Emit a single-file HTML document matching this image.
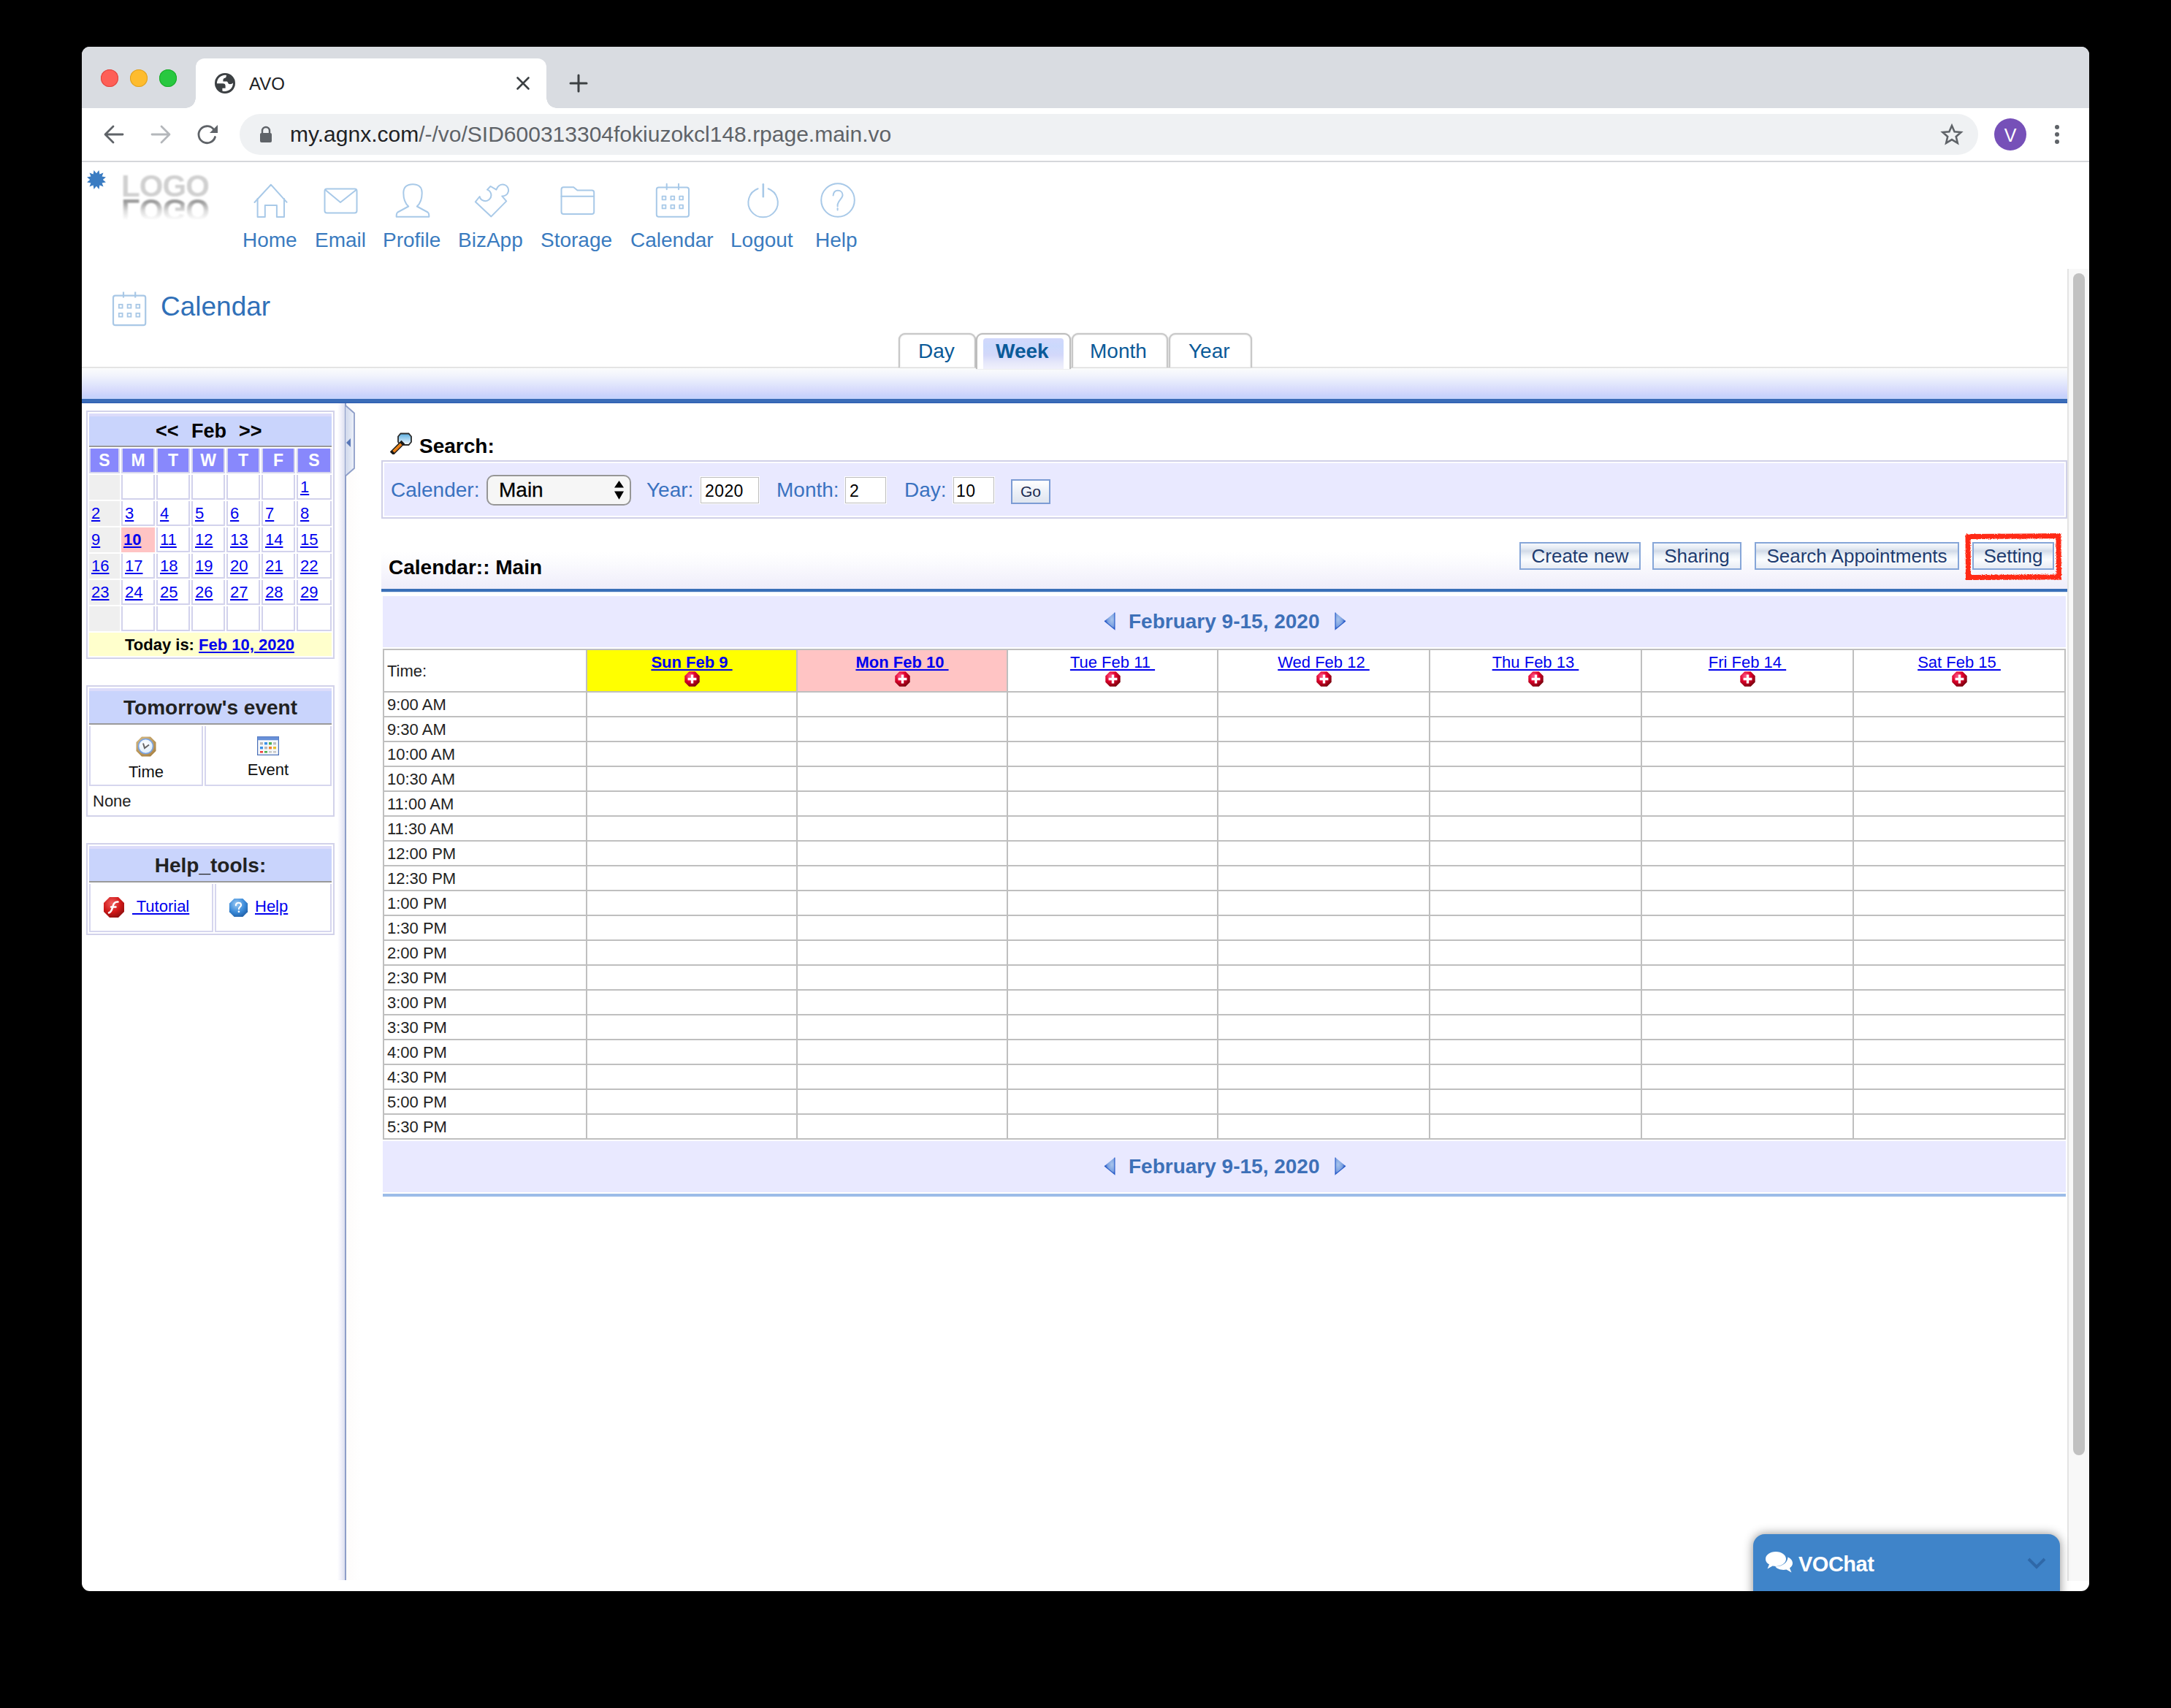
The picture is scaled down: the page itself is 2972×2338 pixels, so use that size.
<!DOCTYPE html>
<html><head><meta charset="utf-8">
<style>
html,body{margin:0;padding:0;}
body{width:2972px;height:2338px;background:#000;overflow:hidden;position:relative;font-family:"Liberation Sans",sans-serif;}
.a{position:absolute;}
.win{position:absolute;left:112px;top:64px;width:2748px;height:2114px;border-radius:11px;overflow:hidden;background:#fff;}
.pg{position:absolute;left:-112px;top:-64px;width:2972px;height:2338px;}
.t{position:absolute;white-space:pre;line-height:1;}
.nav{color:#3a7bbf;font-size:28px;}
.lnk{color:#0000ee;text-decoration:underline;}
.tab{border:2px solid #c8c8c8;border-bottom:none;border-radius:9px 9px 0 0;background:#fff;box-shadow:inset 0 0 1.5px 1px rgba(0,0,0,0.06), 0 0 1.5px rgba(0,0,0,0.25);box-sizing:border-box;}
.tab.act{border-color:#bdbdbd;background:#fff;box-shadow:0 0 1.5px rgba(0,0,0,0.25);}
.tabt{font-size:28px;color:#0a5a98;}
.btn{border:2px solid #86a6d8;box-sizing:border-box;background:linear-gradient(#f6f8fc 0%,#e6ecf4 18%,#d2dbe8 30%,#eef3f8 50%,#fafcfe 65%,#f0f3f8 85%,#e8ecf4 100%);}
</style></head><body>
<div class="win"><div class="pg">

<!-- ===== Chrome tab strip ===== -->
<div class="a" style="left:112px;top:64px;width:2748px;height:84px;background:#d9dce1;"></div>
<div class="a" style="left:138px;top:95px;width:24px;height:24px;border-radius:50%;background:#fe5f57;box-shadow:inset 0 0 0 1px #e0443e;"></div>
<div class="a" style="left:178px;top:95px;width:24px;height:24px;border-radius:50%;background:#febc2e;box-shadow:inset 0 0 0 1px #dea123;"></div>
<div class="a" style="left:218px;top:95px;width:24px;height:24px;border-radius:50%;background:#28c840;box-shadow:inset 0 0 0 1px #1aab29;"></div>
<!-- active tab -->
<div class="a" style="left:268px;top:80px;width:480px;height:68px;background:#fff;border-radius:12px 12px 0 0;"></div>
<div class="a" style="left:254px;top:134px;width:14px;height:14px;background:radial-gradient(circle at 0 0,#d9dce1 13.5px,#fff 14px);"></div>
<div class="a" style="left:748px;top:134px;width:14px;height:14px;background:radial-gradient(circle at 100% 0,#d9dce1 13.5px,#fff 14px);"></div>
<svg class="a" style="left:288px;top:94px" width="40" height="40" viewBox="0 0 40 40">
 <circle cx="20" cy="20" r="14" fill="#3c4043"/>
 <path d="M8.9 20.2 A11.2 11.2 0 0 1 22 8.9 L21.5 11.5 Q21 12.6 19 13 Q17.4 13.5 17.4 15.5 L17.4 17.4 L22.5 17.4 Q23.6 17.6 23.9 19 Q24.5 21.2 27 21.2 Q29.6 21.2 31 19.5 A11.2 11.2 0 0 1 16.4 30.5 L16.4 26.7 L20.6 26.7 L20.6 23.5 Q20.5 20.4 17 20.3 Z" fill="#fff"/>
</svg>
<div class="t" style="left:341px;top:103px;font-size:24px;color:#202124;">AVO</div>
<svg class="a" style="left:704px;top:102px" width="24" height="24" viewBox="0 0 24 24"><path d="M4.5 4.5L19.5 19.5M19.5 4.5L4.5 19.5" stroke="#3c4043" stroke-width="2.6" stroke-linecap="round"/></svg>
<svg class="a" style="left:778px;top:100px" width="28" height="28" viewBox="0 0 28 28"><path d="M14 3V25M3 14H25" stroke="#3c4043" stroke-width="3" stroke-linecap="round"/></svg>

<!-- ===== Toolbar ===== -->
<div class="a" style="left:112px;top:220px;width:2748px;height:2px;background:#d5d7db;"></div>
<svg class="a" style="left:140px;top:168px" width="32" height="32" viewBox="0 0 32 32"><path d="M28 16H5M15 5L4 16L15 27" stroke="#5f6368" stroke-width="2.8" fill="none" stroke-linecap="round" stroke-linejoin="round"/></svg>
<svg class="a" style="left:204px;top:168px" width="32" height="32" viewBox="0 0 32 32"><path d="M4 16H27M17 5L28 16L17 27" stroke="#b4b7bb" stroke-width="2.8" fill="none" stroke-linecap="round" stroke-linejoin="round"/></svg>
<svg class="a" style="left:268px;top:168px" width="32" height="32" viewBox="0 0 32 32"><path d="M26.5 19.5 A11.5 11.5 0 1 1 24 8.5" stroke="#5f6368" stroke-width="2.8" fill="none" stroke-linecap="round"/><path d="M30 3V14H19Z" fill="#5f6368"/></svg>
<div class="a" style="left:328px;top:156px;width:2380px;height:56px;border-radius:28px;background:#eff1f3;"></div>
<svg class="a" style="left:354px;top:172px" width="20" height="24" viewBox="0 0 20 24"><path d="M5 10V7A5 5 0 0 1 15 7V10" stroke="#5f6368" stroke-width="2.4" fill="none"/><rect x="2" y="10" width="16" height="13" rx="2" fill="#5f6368"/></svg>
<div class="t" style="left:397px;top:169px;font-size:30px;color:#5f6368;"><span style="color:#202124">my.agnx.com</span>/-/vo/SID600313304fokiuzokcl148.rpage.main.vo</div>
<svg class="a" style="left:2654px;top:167px" width="36" height="34" viewBox="0 0 36 34"><g transform="translate(18 17.5) scale(0.86) translate(-18 -17.5)"><path d="M18 3L22.2 12.6L32.6 13.5L24.7 20.4L27.1 30.6L18 25.2L8.9 30.6L11.3 20.4L3.4 13.5L13.8 12.6Z" stroke="#5f6368" stroke-width="3" fill="none" stroke-linejoin="miter"/></g></svg>
<div class="a" style="left:2730px;top:162px;width:44px;height:44px;border-radius:50%;background:#7650b8;"></div>
<div class="t" style="left:2740px;top:173px;font-size:25px;color:#fff;width:24px;text-align:center;">V</div>
<div class="a" style="left:2813px;top:171px;width:6px;height:6px;border-radius:50%;background:#5f6368;"></div>
<div class="a" style="left:2813px;top:181px;width:6px;height:6px;border-radius:50%;background:#5f6368;"></div>
<div class="a" style="left:2813px;top:191px;width:6px;height:6px;border-radius:50%;background:#5f6368;"></div>


<!-- ===== Site header ===== -->
<svg class="a" style="left:116px;top:230px" width="32" height="32" viewBox="-16 -16 32 32"><polygon fill="#3a7cc2" points="3.47,-12.94 4.40,-7.62 9.48,-9.48 7.62,-4.40 12.94,-3.47 8.80,-0.00 12.94,3.47 7.62,4.40 9.48,9.48 4.40,7.62 3.47,12.94 0.00,8.80 -3.47,12.94 -4.40,7.62 -9.48,9.48 -7.62,4.40 -12.94,3.47 -8.80,0.00 -12.94,-3.47 -7.62,-4.40 -9.48,-9.48 -4.40,-7.62 -3.47,-12.94 -0.00,-8.80"/></svg>
<div class="t" style="left:166px;top:234px;font-size:42px;font-weight:bold;color:#d0d0d0;filter:blur(1.1px);letter-spacing:-0.9px;">LOGO</div>
<div class="a" style="left:160px;top:233px;width:140px;height:42px;transform:scaleY(-1);transform-origin:0 37.4px;-webkit-mask-image:linear-gradient(to top,#000 25%,rgba(0,0,0,0.35) 55%,rgba(0,0,0,0) 85%);"><div class="t" style="left:6px;top:0;font-size:42px;font-weight:bold;color:#9c9c9c;filter:blur(1.3px);letter-spacing:-0.9px;">LOGO</div></div>

<svg class="a" style="left:0;top:0" width="1200" height="310" viewBox="0 0 1200 310" fill="none" stroke="#a8c9e8" stroke-width="2" stroke-linejoin="round" stroke-linecap="round">
 <!-- home -->
 <path d="M348.5 277 L370.9 252.8 L392.6 276.8"/>
 <path d="M352.6 272 V297 H362.8 V281 H378.9 V297 H389 V272"/>
 <!-- email -->
 <rect x="444.5" y="258.5" width="44" height="33" rx="3"/>
 <path d="M445.5 260 L466 277 L487.5 260"/>
 <!-- profile -->
 <path d="M559.2 282.5 C554 278 552.3 271 552.3 264 C552.3 256 557.5 252.2 565 252.2 C572.5 252.2 577.7 256 577.7 264 C577.7 271 576 278 570.8 282.5 L585.5 290.5 Q587.6 292 587.3 296.8 H542.7 Q542.4 292 544.5 290.5 Z"/>
 <!-- bizapp puzzle -->
 <path d="M672.4 296.4 L650.8 276.3 L656.6 269 A8 8 0 1 0 667 259.6 L671.5 255 L679.4 259.6 L681.2 256.3 A8 8 0 1 1 687.2 268.4 L693.2 275.4 Z"/>
 <!-- storage folder -->
 <path d="M771.5 256.3 H785.2 L790.4 260.6 H810.2 Q813.2 260.6 813.2 263.6 V290 Q813.2 293 810.2 293 H771.5 Q768.5 293 768.5 290 V259.3 Q768.5 256.3 771.5 256.3 Z"/>
 <path d="M768.5 268.7 H813.2"/>
 <!-- calendar -->
 <rect x="898.8" y="256.6" width="44.2" height="40.2" rx="3"/>
 <path d="M912.7 251.8 V259.2 M929 251.8 V259.2"/>
 <g stroke-width="1.8"><rect x="906.6" y="268.6" width="4.8" height="4.8"/><rect x="918.4" y="268.6" width="4.8" height="4.8"/><rect x="930.2" y="268.6" width="4.8" height="4.8"/><rect x="906.6" y="280.6" width="4.8" height="4.8"/><rect x="918.4" y="280.6" width="4.8" height="4.8"/><rect x="930.2" y="280.6" width="4.8" height="4.8"/></g>
 <!-- logout -->
 <path d="M1037.6 258.2 A20.2 20.2 0 1 0 1051.6 258.2"/>
 <path d="M1044.8 252.2 V269.2" stroke-width="2.6"/>
 <!-- help -->
 <circle cx="1147" cy="274" r="22.8"/>
 <path d="M1140.6 267.5 C1141 263 1143.5 260.8 1147 260.8 C1151 260.8 1153.5 263.5 1153.5 267 C1153.5 271.5 1147.5 274.5 1146.6 280 V282.5"/>
 <path d="M1146.6 285.2 V287.6"/>
</svg>
<div class="t nav" style="left:332px;top:315px;">Home</div>
<div class="t nav" style="left:431px;top:315px;">Email</div>
<div class="t nav" style="left:524px;top:315px;">Profile</div>
<div class="t nav" style="left:627px;top:315px;">BizApp</div>
<div class="t nav" style="left:740px;top:315px;">Storage</div>
<div class="t nav" style="left:863px;top:315px;">Calendar</div>
<div class="t nav" style="left:1000px;top:315px;">Logout</div>
<div class="t nav" style="left:1116px;top:315px;">Help</div>

<!-- ===== iframe content ===== -->
<!-- page title -->
<svg class="a" style="left:150px;top:395px" width="56" height="56" viewBox="150 395 56 56" fill="none" stroke="#a9c8e6" stroke-width="2.2">
 <rect x="155" y="404.6" width="44.2" height="40.6" rx="3"/>
 <path d="M169 399.6 V407.5 M185.2 399.6 V407.5"/>
 <g stroke-width="1.8"><rect x="162.8" y="416.8" width="4.8" height="4.8"/><rect x="174.6" y="416.8" width="4.8" height="4.8"/><rect x="186.4" y="416.8" width="4.8" height="4.8"/><rect x="162.8" y="428.8" width="4.8" height="4.8"/><rect x="174.6" y="428.8" width="4.8" height="4.8"/><rect x="186.4" y="428.8" width="4.8" height="4.8"/></g>
</svg>
<div class="t" style="left:220px;top:401px;font-size:37px;color:#3070b8;">Calendar</div>

<!-- band -->
<div class="a" style="left:112px;top:502px;width:2718px;height:2px;background:#e4e4e4;"></div>
<div class="a" style="left:112px;top:504px;width:2718px;height:42px;background:linear-gradient(#fbfcfc 0%,#f1f3fc 25%,#e2e7fc 50%,#d5d9fc 75%,#c8d2fc 90%,#c4d2fc 100%);"></div>
<div class="a" style="left:112px;top:546px;width:2718px;height:6px;background:#3a6cb8;border-bottom:1px solid #2a5ab0;box-sizing:border-box;"></div>

<!-- view tabs -->
<div class="a tab" style="left:1230px;top:456px;width:106px;height:47px;"></div>
<div class="a tab" style="left:1467px;top:456px;width:132px;height:47px;"></div>
<div class="a tab" style="left:1600px;top:456px;width:114px;height:47px;"></div>
<div class="a tab act" style="left:1336px;top:456px;width:130px;height:49px;"><div class="a" style="left:8px;top:5px;right:8px;bottom:0;background:linear-gradient(#d2d8fc 0%,#cbd9fc 25%,#d3d8fa 55%,#e6e8fa 80%,#f0f0fc 100%);border-radius:4px 4px 0 0;"></div></div>
<div class="t tabt" style="left:1257px;top:467px;">Day</div>
<div class="t tabt" style="left:1363px;top:467px;font-weight:bold;">Week</div>
<div class="t tabt" style="left:1492px;top:467px;">Month</div>
<div class="t tabt" style="left:1627px;top:467px;">Year</div>

<!-- scrollbar -->
<div class="a" style="left:2830px;top:368px;width:30px;height:1796px;background:#f8f8f8;border-left:2px solid #e4e4e4;box-sizing:border-box;"></div>
<div class="a" style="left:2838px;top:374px;width:16px;height:1618px;border-radius:8px;background:#c1c1c1;"></div>

<!-- splitter -->
<div class="a" style="left:462px;top:552px;width:11px;height:1611px;background:linear-gradient(to right,rgba(240,240,252,0) 0%,#f0f0fa 45%,#d8dcec 100%);"></div>
<div class="a" style="left:472px;top:552px;width:2px;height:1611px;background:#8e9ec8;"></div>
<div class="a" style="left:474px;top:552px;width:20px;height:1611px;background:linear-gradient(to right,#fdfbfa,#fff);"></div>
<svg class="a" style="left:460px;top:552px" width="30" height="104" viewBox="460 552 30 104">
 <defs><linearGradient id="hg" x1="0" x2="1" y1="0" y2="0"><stop offset="0" stop-color="#d0d8ec"/><stop offset="1" stop-color="#eef2fa"/></linearGradient></defs>
 <path d="M473 552 V556 L485 566 V641 L473 651 V656 H462 V552 Z" fill="#fff" opacity="0"/>
 <path d="M473 554 L485 565 V641 L473 652 Z" fill="url(#hg)"/>
 <path d="M473 552 V555 L485 565.5 V641 L473 651.5 V656" fill="none" stroke="#8e9ec8" stroke-width="1.8"/>
 <path d="M480 600 L474 606 L480 612 Z" fill="#5a78b8"/>
</svg>
<!-- sidebar -->
<div class="a" style="left:118px;top:562px;width:340px;height:340px;border:2px solid #d2d2ea;box-sizing:border-box;"></div>
<div class="a" style="left:122px;top:566px;width:332px;height:4px;background:#dcdcfa;"></div>
<div class="a" style="left:122px;top:570px;width:332px;height:40px;background:#c9d4fc;"></div>
<div class="a" style="left:122px;top:610px;width:332px;height:2px;background:#9a9a9a;"></div>
<div class="t" style="left:213px;top:577.0px;font-size:27px;font-weight:bold;color:#000;">&lt;&lt;</div>
<div class="t" style="left:262px;top:577.0px;font-size:27px;font-weight:bold;color:#000;">Feb</div>
<div class="t" style="left:327px;top:577.0px;font-size:27px;font-weight:bold;color:#000;">&gt;&gt;</div>
<div class="a" style="left:122px;top:614px;width:42px;height:34px;background:#8888fc;border:2px solid #d6d6ee;border-top:none;box-sizing:border-box;"></div>
<div class="t" style="left:122px;top:619.0px;width:42px;text-align:center;font-size:23px;font-weight:bold;color:#fff;">S</div>
<div class="a" style="left:166px;top:614px;width:46px;height:34px;background:#8888fc;border:2px solid #d6d6ee;border-top:none;box-sizing:border-box;"></div>
<div class="t" style="left:166px;top:619.0px;width:46px;text-align:center;font-size:23px;font-weight:bold;color:#fff;">M</div>
<div class="a" style="left:214px;top:614px;width:46px;height:34px;background:#8888fc;border:2px solid #d6d6ee;border-top:none;box-sizing:border-box;"></div>
<div class="t" style="left:214px;top:619.0px;width:46px;text-align:center;font-size:23px;font-weight:bold;color:#fff;">T</div>
<div class="a" style="left:262px;top:614px;width:46px;height:34px;background:#8888fc;border:2px solid #d6d6ee;border-top:none;box-sizing:border-box;"></div>
<div class="t" style="left:262px;top:619.0px;width:46px;text-align:center;font-size:23px;font-weight:bold;color:#fff;">W</div>
<div class="a" style="left:310px;top:614px;width:46px;height:34px;background:#8888fc;border:2px solid #d6d6ee;border-top:none;box-sizing:border-box;"></div>
<div class="t" style="left:310px;top:619.0px;width:46px;text-align:center;font-size:23px;font-weight:bold;color:#fff;">T</div>
<div class="a" style="left:358px;top:614px;width:46px;height:34px;background:#8888fc;border:2px solid #d6d6ee;border-top:none;box-sizing:border-box;"></div>
<div class="t" style="left:358px;top:619.0px;width:46px;text-align:center;font-size:23px;font-weight:bold;color:#fff;">F</div>
<div class="a" style="left:406px;top:614px;width:48px;height:34px;background:#8888fc;border:2px solid #d6d6ee;border-top:none;box-sizing:border-box;"></div>
<div class="t" style="left:406px;top:619.0px;width:48px;text-align:center;font-size:23px;font-weight:bold;color:#fff;">S</div>
<div class="a" style="left:122px;top:650px;width:42px;height:34px;background:#efefef;"></div>
<div class="a" style="left:166px;top:650px;width:46px;height:34px;border:2px solid #d2d2ec;border-top:none;box-sizing:border-box;background:#fff;"></div>
<div class="a" style="left:214px;top:650px;width:46px;height:34px;border:2px solid #d2d2ec;border-top:none;box-sizing:border-box;background:#fff;"></div>
<div class="a" style="left:262px;top:650px;width:46px;height:34px;border:2px solid #d2d2ec;border-top:none;box-sizing:border-box;background:#fff;"></div>
<div class="a" style="left:310px;top:650px;width:46px;height:34px;border:2px solid #d2d2ec;border-top:none;box-sizing:border-box;background:#fff;"></div>
<div class="a" style="left:358px;top:650px;width:46px;height:34px;border:2px solid #d2d2ec;border-top:none;box-sizing:border-box;background:#fff;"></div>
<div class="a" style="left:406px;top:650px;width:48px;height:34px;border:2px solid #d2d2ec;border-top:none;box-sizing:border-box;background:#fff;"></div>
<div class="t lnk" style="left:411px;top:656.0px;font-size:22px;">1</div>
<div class="a" style="left:122px;top:686px;width:42px;height:34px;background:#efefef;"></div>
<div class="t lnk" style="left:125px;top:692.0px;font-size:22px;">2</div>
<div class="a" style="left:166px;top:686px;width:46px;height:34px;border:2px solid #d2d2ec;border-top:none;box-sizing:border-box;background:#fff;"></div>
<div class="t lnk" style="left:171px;top:692.0px;font-size:22px;">3</div>
<div class="a" style="left:214px;top:686px;width:46px;height:34px;border:2px solid #d2d2ec;border-top:none;box-sizing:border-box;background:#fff;"></div>
<div class="t lnk" style="left:219px;top:692.0px;font-size:22px;">4</div>
<div class="a" style="left:262px;top:686px;width:46px;height:34px;border:2px solid #d2d2ec;border-top:none;box-sizing:border-box;background:#fff;"></div>
<div class="t lnk" style="left:267px;top:692.0px;font-size:22px;">5</div>
<div class="a" style="left:310px;top:686px;width:46px;height:34px;border:2px solid #d2d2ec;border-top:none;box-sizing:border-box;background:#fff;"></div>
<div class="t lnk" style="left:315px;top:692.0px;font-size:22px;">6</div>
<div class="a" style="left:358px;top:686px;width:46px;height:34px;border:2px solid #d2d2ec;border-top:none;box-sizing:border-box;background:#fff;"></div>
<div class="t lnk" style="left:363px;top:692.0px;font-size:22px;">7</div>
<div class="a" style="left:406px;top:686px;width:48px;height:34px;border:2px solid #d2d2ec;border-top:none;box-sizing:border-box;background:#fff;"></div>
<div class="t lnk" style="left:411px;top:692.0px;font-size:22px;">8</div>
<div class="a" style="left:122px;top:722px;width:42px;height:34px;background:#efefef;"></div>
<div class="t lnk" style="left:125px;top:728.0px;font-size:22px;">9</div>
<div class="a" style="left:166px;top:722px;width:46px;height:34px;background:#ffc4c4;"></div>
<div class="t lnk" style="left:169px;top:728.0px;font-size:22px;font-weight:bold;">10</div>
<div class="a" style="left:214px;top:722px;width:46px;height:34px;border:2px solid #d2d2ec;border-top:none;box-sizing:border-box;background:#fff;"></div>
<div class="t lnk" style="left:219px;top:728.0px;font-size:22px;">11</div>
<div class="a" style="left:262px;top:722px;width:46px;height:34px;border:2px solid #d2d2ec;border-top:none;box-sizing:border-box;background:#fff;"></div>
<div class="t lnk" style="left:267px;top:728.0px;font-size:22px;">12</div>
<div class="a" style="left:310px;top:722px;width:46px;height:34px;border:2px solid #d2d2ec;border-top:none;box-sizing:border-box;background:#fff;"></div>
<div class="t lnk" style="left:315px;top:728.0px;font-size:22px;">13</div>
<div class="a" style="left:358px;top:722px;width:46px;height:34px;border:2px solid #d2d2ec;border-top:none;box-sizing:border-box;background:#fff;"></div>
<div class="t lnk" style="left:363px;top:728.0px;font-size:22px;">14</div>
<div class="a" style="left:406px;top:722px;width:48px;height:34px;border:2px solid #d2d2ec;border-top:none;box-sizing:border-box;background:#fff;"></div>
<div class="t lnk" style="left:411px;top:728.0px;font-size:22px;">15</div>
<div class="a" style="left:122px;top:758px;width:42px;height:34px;background:#efefef;"></div>
<div class="t lnk" style="left:125px;top:764.0px;font-size:22px;">16</div>
<div class="a" style="left:166px;top:758px;width:46px;height:34px;border:2px solid #d2d2ec;border-top:none;box-sizing:border-box;background:#fff;"></div>
<div class="t lnk" style="left:171px;top:764.0px;font-size:22px;">17</div>
<div class="a" style="left:214px;top:758px;width:46px;height:34px;border:2px solid #d2d2ec;border-top:none;box-sizing:border-box;background:#fff;"></div>
<div class="t lnk" style="left:219px;top:764.0px;font-size:22px;">18</div>
<div class="a" style="left:262px;top:758px;width:46px;height:34px;border:2px solid #d2d2ec;border-top:none;box-sizing:border-box;background:#fff;"></div>
<div class="t lnk" style="left:267px;top:764.0px;font-size:22px;">19</div>
<div class="a" style="left:310px;top:758px;width:46px;height:34px;border:2px solid #d2d2ec;border-top:none;box-sizing:border-box;background:#fff;"></div>
<div class="t lnk" style="left:315px;top:764.0px;font-size:22px;">20</div>
<div class="a" style="left:358px;top:758px;width:46px;height:34px;border:2px solid #d2d2ec;border-top:none;box-sizing:border-box;background:#fff;"></div>
<div class="t lnk" style="left:363px;top:764.0px;font-size:22px;">21</div>
<div class="a" style="left:406px;top:758px;width:48px;height:34px;border:2px solid #d2d2ec;border-top:none;box-sizing:border-box;background:#fff;"></div>
<div class="t lnk" style="left:411px;top:764.0px;font-size:22px;">22</div>
<div class="a" style="left:122px;top:794px;width:42px;height:34px;background:#efefef;"></div>
<div class="t lnk" style="left:125px;top:800.0px;font-size:22px;">23</div>
<div class="a" style="left:166px;top:794px;width:46px;height:34px;border:2px solid #d2d2ec;border-top:none;box-sizing:border-box;background:#fff;"></div>
<div class="t lnk" style="left:171px;top:800.0px;font-size:22px;">24</div>
<div class="a" style="left:214px;top:794px;width:46px;height:34px;border:2px solid #d2d2ec;border-top:none;box-sizing:border-box;background:#fff;"></div>
<div class="t lnk" style="left:219px;top:800.0px;font-size:22px;">25</div>
<div class="a" style="left:262px;top:794px;width:46px;height:34px;border:2px solid #d2d2ec;border-top:none;box-sizing:border-box;background:#fff;"></div>
<div class="t lnk" style="left:267px;top:800.0px;font-size:22px;">26</div>
<div class="a" style="left:310px;top:794px;width:46px;height:34px;border:2px solid #d2d2ec;border-top:none;box-sizing:border-box;background:#fff;"></div>
<div class="t lnk" style="left:315px;top:800.0px;font-size:22px;">27</div>
<div class="a" style="left:358px;top:794px;width:46px;height:34px;border:2px solid #d2d2ec;border-top:none;box-sizing:border-box;background:#fff;"></div>
<div class="t lnk" style="left:363px;top:800.0px;font-size:22px;">28</div>
<div class="a" style="left:406px;top:794px;width:48px;height:34px;border:2px solid #d2d2ec;border-top:none;box-sizing:border-box;background:#fff;"></div>
<div class="t lnk" style="left:411px;top:800.0px;font-size:22px;">29</div>
<div class="a" style="left:122px;top:830px;width:42px;height:34px;background:#efefef;"></div>
<div class="a" style="left:166px;top:830px;width:46px;height:34px;border:2px solid #d2d2ec;border-top:none;box-sizing:border-box;background:#fff;"></div>
<div class="a" style="left:214px;top:830px;width:46px;height:34px;border:2px solid #d2d2ec;border-top:none;box-sizing:border-box;background:#fff;"></div>
<div class="a" style="left:262px;top:830px;width:46px;height:34px;border:2px solid #d2d2ec;border-top:none;box-sizing:border-box;background:#fff;"></div>
<div class="a" style="left:310px;top:830px;width:46px;height:34px;border:2px solid #d2d2ec;border-top:none;box-sizing:border-box;background:#fff;"></div>
<div class="a" style="left:358px;top:830px;width:46px;height:34px;border:2px solid #d2d2ec;border-top:none;box-sizing:border-box;background:#fff;"></div>
<div class="a" style="left:406px;top:830px;width:48px;height:34px;border:2px solid #d2d2ec;border-top:none;box-sizing:border-box;background:#fff;"></div>
<div class="a" style="left:122px;top:866px;width:332px;height:32px;background:#ffffcc;"></div>
<div class="t" style="left:171px;top:872.0px;font-size:22px;font-weight:bold;color:#000;">Today is: <span class="lnk">Feb 10, 2020</span></div>
<div class="a" style="left:118px;top:938px;width:340px;height:180px;border:2px solid #d2d2ea;box-sizing:border-box;"></div>
<div class="a" style="left:122px;top:942px;width:332px;height:4px;background:#dcdcfa;"></div>
<div class="a" style="left:122px;top:946px;width:332px;height:44px;background:#c9d4fc;"></div>
<div class="a" style="left:122px;top:990px;width:332px;height:2px;background:#9a9a9a;"></div>
<div class="t" style="left:122px;width:332px;text-align:center;top:955.0px;font-size:28px;font-weight:bold;color:#222;">Tomorrow's event</div>
<div class="a" style="left:122px;top:994px;width:156px;height:82px;border:2px solid #d6d6ee;border-top:none;box-sizing:border-box;"></div>
<div class="a" style="left:280px;top:994px;width:174px;height:82px;border:2px solid #d6d6ee;border-top:none;box-sizing:border-box;"></div>
<div class="t" style="left:122px;width:156px;text-align:center;top:1046.0px;font-size:22px;color:#111;">Time</div>
<div class="t" style="left:280px;width:174px;text-align:center;top:1043.0px;font-size:22px;color:#111;">Event</div>
<div class="t" style="left:127px;top:1086.0px;font-size:22px;color:#222;">None</div>
<svg class="a" style="left:185px;top:1007px" width="30" height="30" viewBox="0 0 30 30">
<defs><radialGradient id="clk" cx=".4" cy=".35" r=".7"><stop offset="0" stop-color="#e8d2a0"/><stop offset="1" stop-color="#a88040"/></radialGradient>
<radialGradient id="clf" cx=".45" cy=".4" r=".6"><stop offset="0" stop-color="#ffffff"/><stop offset="1" stop-color="#dfeefa"/></radialGradient></defs>
<polygon points="9,1.5 21,1.5 28.5,9 28.5,21 21,28.5 9,28.5 1.5,21 1.5,9" fill="url(#clk)"/>
<circle cx="14.5" cy="14.5" r="10" fill="url(#clf)" stroke="#7aa2e0" stroke-width="1.6"/>
<path d="M11 10.5 L13 17 L19 12.5" stroke="#666" stroke-width="2" fill="none" stroke-linejoin="miter"/>
</svg>
<svg class="a" style="left:352px;top:1008px" width="30" height="26" viewBox="0 0 30 26">
<rect x=".6" y=".6" width="28.8" height="24.8" fill="#f6f8fa" stroke="#4a70b8" stroke-width="1.2"/>
<rect x=".6" y=".6" width="28.8" height="4.6" fill="#6890d8"/>
<g><rect x="4" y="8" width="4" height="3.4" fill="#b8b8b8"/><rect x="10" y="8" width="4" height="3.4" fill="#3a90e8"/><rect x="16" y="8" width="4" height="3.4" fill="#50b050"/><rect x="22" y="8" width="4" height="3.4" fill="#c0c0c0"/>
<rect x="4" y="14" width="4" height="3.4" fill="#3a90e8"/><rect x="10" y="14" width="4" height="3.4" fill="#b8b8b8"/><rect x="16" y="14" width="4" height="3.4" fill="#f08030"/><rect x="22" y="14" width="4" height="3.4" fill="#e8c030"/>
<rect x="4" y="20" width="4" height="2.6" fill="#f04040"/><rect x="10" y="20" width="4" height="2.6" fill="#50b050"/><rect x="16" y="20" width="4" height="2.6" fill="#c8c8c8"/><rect x="22" y="20" width="4" height="2.6" fill="#c8c8c8"/></g>
</svg>
<div class="a" style="left:118px;top:1154px;width:340px;height:126px;border:2px solid #d2d2ea;box-sizing:border-box;"></div>
<div class="a" style="left:122px;top:1158px;width:332px;height:4px;background:#dcdcfa;"></div>
<div class="a" style="left:122px;top:1162px;width:332px;height:44px;background:#c9d4fc;"></div>
<div class="a" style="left:122px;top:1206px;width:332px;height:2px;background:#9a9a9a;"></div>
<div class="t" style="left:122px;width:332px;text-align:center;top:1171.0px;font-size:28px;font-weight:bold;color:#222;">Help_tools:</div>
<div class="a" style="left:122px;top:1210px;width:170px;height:66px;border:2px solid #d6d6ee;border-top:none;box-sizing:border-box;"></div>
<div class="a" style="left:294px;top:1210px;width:160px;height:66px;border:2px solid #d6d6ee;border-top:none;box-sizing:border-box;"></div>
<div class="t lnk" style="left:181px;top:1230.0px;font-size:22px;"> Tutorial</div>
<div class="t lnk" style="left:349px;top:1230.0px;font-size:22px;">Help</div>
<svg class="a" style="left:141px;top:1227px" width="30" height="30" viewBox="0 0 30 30">
<defs><radialGradient id="fl" cx=".4" cy=".3" r=".75"><stop offset="0" stop-color="#f06060"/><stop offset=".6" stop-color="#d01818"/><stop offset="1" stop-color="#901010"/></radialGradient></defs>
<polygon points="9,1 21,1 29,9 29,21 21,29 9,29 1,21 1,9" fill="url(#fl)"/>
<circle cx="15" cy="15" r="13.5" fill="url(#fl)"/>
<path d="M20.5 7.5 C16 7 14.5 9.5 13.5 13.5 C12.5 18 11.5 21.5 8 22.5" stroke="#fff" stroke-width="2.6" fill="none" stroke-linecap="round"/>
<path d="M11 14.5 H17.5" stroke="#fff" stroke-width="2.4" stroke-linecap="round"/>
</svg>
<svg class="a" style="left:313px;top:1229px" width="27" height="27" viewBox="0 0 30 30">
<defs><radialGradient id="hp" cx=".4" cy=".3" r=".75"><stop offset="0" stop-color="#9ccaf4"/><stop offset=".6" stop-color="#3a8ad8"/><stop offset="1" stop-color="#2060a8"/></radialGradient></defs>
<polygon points="8.5,1 21.5,1 29,8.5 29,21.5 21.5,29 8.5,29 1,21.5 1,8.5" fill="url(#hp)"/>
<path d="M11 11.5 C11 8.5 13 7.5 15 7.5 C17.5 7.5 19 9 19 11 C19 13.5 15.5 14 15.5 17" stroke="#fff" stroke-width="2.4" fill="none" stroke-linecap="round"/>
<circle cx="15.5" cy="21" r="1.5" fill="#fff"/>
</svg>
<!-- main -->
<svg width="0" height="0" style="position:absolute"><defs>
<radialGradient id="pg1" cx=".35" cy=".3" r=".8"><stop offset="0" stop-color="#ff5a8a"/><stop offset=".45" stop-color="#e0002c"/><stop offset="1" stop-color="#6a0008"/></radialGradient>
<g id="plusic"><polygon points="6.3,0.3 14.7,0.3 20.7,6.3 20.7,14.7 14.7,20.7 6.3,20.7 0.3,14.7 0.3,6.3" fill="url(#pg1)"/><path d="M8.8 4.6 H12.2 V8.8 H16.4 V12.2 H12.2 V16.4 H8.8 V12.2 H4.6 V8.8 H8.8 Z" fill="#fff"/></g>
</defs></svg><svg class="a" style="left:534px;top:590px" width="32" height="32" viewBox="534 590 32 32">
<defs><linearGradient id="mg" x1="0" y1="0" x2="0" y2="1"><stop offset="0" stop-color="#5aaee0"/><stop offset=".6" stop-color="#b8dcf4"/><stop offset="1" stop-color="#ffffff"/></linearGradient>
<linearGradient id="mh" x1="0" y1="0" x2="1" y2="1"><stop offset="0" stop-color="#f0b020"/><stop offset="1" stop-color="#e05010"/></linearGradient></defs>
<polygon points="548.5,593.5 559.5,593.5 563,597.5 563,605 559.5,609 548.5,609 545,605 545,597.5" fill="url(#mg)" stroke="#2a2a2a" stroke-width="1.8"/>
<path d="M549.5 607.5 L538.5 618.5" stroke="#1a1a1a" stroke-width="6.6" stroke-linecap="square"/>
<path d="M549.2 607.8 L538.6 618.4" stroke="url(#mh)" stroke-width="3.8"/>
</svg>
<div class="t" style="left:574px;top:597.0px;font-size:28px;font-weight:bold;color:#000;">Search:</div>
<div class="a" style="left:522px;top:630px;width:2308px;height:80px;border:2px solid #d0d0e8;box-sizing:border-box;"></div>
<div class="a" style="left:526px;top:634px;width:2300px;height:72px;background:#e9e9ff;"></div>
<div class="t" style="left:535px;top:657.0px;font-size:28px;color:#3a72c0;">Calender:</div>
<div class="a" style="left:666px;top:650px;width:198px;height:42px;border:2px solid #969696;border-radius:10px;background:#f6f6f6;box-sizing:border-box;"></div>
<div class="t" style="left:683px;top:657.0px;font-size:28px;color:#000;-webkit-text-stroke:0.3px #000;">Main</div>
<svg class="a" style="left:840px;top:657px" width="16" height="28" viewBox="0 0 16 28"><path d="M1 10.6 L7.5 1 L14 10.6 Z M1 15.4 L14 15.4 L7.5 26.7 Z" fill="#000"/></svg>
<div class="t" style="left:885px;top:657.0px;font-size:28px;color:#3a72c0;">Year:</div>
<div class="a" style="left:959px;top:653px;width:80px;height:36px;border:1.5px solid #bdbdbd;background:#fff;box-sizing:border-box;box-shadow:0 0 0 1px #fff;"></div>
<div class="t" style="left:965px;top:661.0px;font-size:23px;color:#000;letter-spacing:0.4px;">2020</div>
<div class="a" style="left:1157px;top:653px;width:56px;height:36px;border:1.5px solid #bdbdbd;background:#fff;box-sizing:border-box;box-shadow:0 0 0 1px #fff;"></div>
<div class="t" style="left:1163px;top:661.0px;font-size:23px;color:#000;letter-spacing:0.4px;">2</div>
<div class="a" style="left:1305px;top:653px;width:56px;height:36px;border:1.5px solid #bdbdbd;background:#fff;box-sizing:border-box;box-shadow:0 0 0 1px #fff;"></div>
<div class="t" style="left:1309px;top:661.0px;font-size:23px;color:#000;letter-spacing:0.4px;">10</div>
<div class="t" style="left:1063px;top:657.0px;font-size:28px;color:#3a72c0;">Month:</div>
<div class="t" style="left:1238px;top:657.0px;font-size:28px;color:#3a72c0;">Day:</div>
<div class="a" style="left:1384px;top:656px;width:54px;height:34px;border:2px solid #7c9cd4;box-sizing:border-box;background:linear-gradient(#ffffff 0%,#eef2f8 45%,#dfe5ef 100%);"></div>
<div class="t" style="left:1384px;width:54px;text-align:center;top:662.0px;font-size:21px;color:#1a2a50;">Go</div>
<div class="a" style="left:522px;top:755px;width:2308px;height:51px;background:linear-gradient(#ffffff 0%,#fbfbfe 30%,#efedfa 100%);"></div>
<div class="a" style="left:522px;top:806px;width:2308px;height:4px;background:#3a70b8;"></div>
<div class="a" style="left:522px;top:810px;width:2308px;height:1px;background:#d8e4f4;"></div>
<div class="t" style="left:532px;top:763.0px;font-size:28px;font-weight:bold;color:#000;">Calendar:: Main</div>
<div class="a btn" style="left:2080px;top:742px;width:166px;height:38px;"></div>
<div class="t" style="left:2080px;width:166px;text-align:center;top:748.0px;font-size:26px;color:#1e3c70;">Create new</div>
<div class="a btn" style="left:2262px;top:742px;width:122px;height:38px;"></div>
<div class="t" style="left:2262px;width:122px;text-align:center;top:748.0px;font-size:26px;color:#1e3c70;">Sharing</div>
<div class="a btn" style="left:2402px;top:742px;width:280px;height:38px;"></div>
<div class="t" style="left:2402px;width:280px;text-align:center;top:748.0px;font-size:26px;color:#1e3c70;">Search Appointments</div>
<div class="a btn" style="left:2700px;top:742px;width:112px;height:38px;"></div>
<div class="t" style="left:2700px;width:112px;text-align:center;top:748.0px;font-size:26px;color:#1e3c70;">Setting</div>
<svg class="a" style="left:2684px;top:724px" width="146" height="78" viewBox="2684 724 146 78">
<defs><filter id="rough" x="-5%" y="-5%" width="110%" height="110%"><feTurbulence type="fractalNoise" baseFrequency="0.9" numOctaves="2" seed="3" result="n"/><feDisplacementMap in="SourceGraphic" in2="n" scale="3.5"/></filter></defs>
<g filter="url(#rough)"><path d="M2694 734.5 L2818 733.5 L2818.5 790 L2694.5 790.5 Z" fill="none" stroke="#ff2a12" stroke-width="7"/></g>
</svg>
<div class="a" style="left:524px;top:816px;width:2304px;height:70px;background:#e9e9ff;"></div>
<svg class="a" style="left:1510px;top:838px" width="18" height="26" viewBox="0 0 18 26"><defs><radialGradient id="tl816" cx=".72" cy=".42" r=".75"><stop offset="0" stop-color="#a8c4ec"/><stop offset=".55" stop-color="#7aa0e0"/><stop offset="1" stop-color="#0a40c0"/></radialGradient></defs><path d="M2 12 L16 0.5 V23.5 Z" fill="url(#tl816)"/><path d="M2 12 L16 23.5 V0.5" fill="none" stroke="#1048c0" stroke-width="1.2" opacity=".8"/></svg>
<div class="t" style="left:1545px;top:837.0px;font-size:28px;font-weight:bold;color:#3d70b8;">February 9-15, 2020</div>
<svg class="a" style="left:1826px;top:838px" width="18" height="26" viewBox="0 0 18 26"><defs><radialGradient id="tr816" cx=".28" cy=".42" r=".75"><stop offset="0" stop-color="#a8c4ec"/><stop offset=".55" stop-color="#7aa0e0"/><stop offset="1" stop-color="#0a40c0"/></radialGradient></defs><path d="M16 12 L2 0.5 V23.5 Z" fill="url(#tr816)"/><path d="M16 12 L2 23.5 V0.5" fill="none" stroke="#1048c0" stroke-width="1.2" opacity=".8"/></svg>
<div class="a" style="left:524px;top:1562px;width:2304px;height:70px;background:#e9e9ff;"></div>
<div class="a" style="left:524px;top:1634px;width:2304px;height:4px;background:#9cbce8;"></div>
<svg class="a" style="left:1510px;top:1584px" width="18" height="26" viewBox="0 0 18 26"><defs><radialGradient id="tl1562" cx=".72" cy=".42" r=".75"><stop offset="0" stop-color="#a8c4ec"/><stop offset=".55" stop-color="#7aa0e0"/><stop offset="1" stop-color="#0a40c0"/></radialGradient></defs><path d="M2 12 L16 0.5 V23.5 Z" fill="url(#tl1562)"/><path d="M2 12 L16 23.5 V0.5" fill="none" stroke="#1048c0" stroke-width="1.2" opacity=".8"/></svg>
<div class="t" style="left:1545px;top:1583.0px;font-size:28px;font-weight:bold;color:#3d70b8;">February 9-15, 2020</div>
<svg class="a" style="left:1826px;top:1584px" width="18" height="26" viewBox="0 0 18 26"><defs><radialGradient id="tr1562" cx=".28" cy=".42" r=".75"><stop offset="0" stop-color="#a8c4ec"/><stop offset=".55" stop-color="#7aa0e0"/><stop offset="1" stop-color="#0a40c0"/></radialGradient></defs><path d="M16 12 L2 0.5 V23.5 Z" fill="url(#tr1562)"/><path d="M16 12 L2 23.5 V0.5" fill="none" stroke="#1048c0" stroke-width="1.2" opacity=".8"/></svg>
<div class="a" style="left:804px;top:890px;width:286px;height:56px;background:#ffff00;"></div>
<div class="a" style="left:1092px;top:890px;width:286px;height:56px;background:#ffc4c4;"></div>
<div class="a" style="left:524px;top:888px;width:2px;height:672px;background:#bfbfbf;"></div>
<div class="a" style="left:802px;top:888px;width:2px;height:672px;background:#bfbfbf;"></div>
<div class="a" style="left:1090px;top:888px;width:2px;height:672px;background:#bfbfbf;"></div>
<div class="a" style="left:1378px;top:888px;width:2px;height:672px;background:#bfbfbf;"></div>
<div class="a" style="left:1666px;top:888px;width:2px;height:672px;background:#bfbfbf;"></div>
<div class="a" style="left:1956px;top:888px;width:2px;height:672px;background:#bfbfbf;"></div>
<div class="a" style="left:2246px;top:888px;width:2px;height:672px;background:#bfbfbf;"></div>
<div class="a" style="left:2536px;top:888px;width:2px;height:672px;background:#bfbfbf;"></div>
<div class="a" style="left:2826px;top:888px;width:2px;height:672px;background:#bfbfbf;"></div>
<div class="a" style="left:524px;top:888px;width:2304px;height:2px;background:#bfbfbf;"></div>
<div class="a" style="left:524px;top:946px;width:2304px;height:2px;background:#bfbfbf;"></div>
<div class="a" style="left:524px;top:980px;width:2304px;height:2px;background:#bfbfbf;"></div>
<div class="a" style="left:524px;top:1014px;width:2304px;height:2px;background:#bfbfbf;"></div>
<div class="a" style="left:524px;top:1048px;width:2304px;height:2px;background:#bfbfbf;"></div>
<div class="a" style="left:524px;top:1082px;width:2304px;height:2px;background:#bfbfbf;"></div>
<div class="a" style="left:524px;top:1116px;width:2304px;height:2px;background:#bfbfbf;"></div>
<div class="a" style="left:524px;top:1150px;width:2304px;height:2px;background:#bfbfbf;"></div>
<div class="a" style="left:524px;top:1184px;width:2304px;height:2px;background:#bfbfbf;"></div>
<div class="a" style="left:524px;top:1218px;width:2304px;height:2px;background:#bfbfbf;"></div>
<div class="a" style="left:524px;top:1252px;width:2304px;height:2px;background:#bfbfbf;"></div>
<div class="a" style="left:524px;top:1286px;width:2304px;height:2px;background:#bfbfbf;"></div>
<div class="a" style="left:524px;top:1320px;width:2304px;height:2px;background:#bfbfbf;"></div>
<div class="a" style="left:524px;top:1354px;width:2304px;height:2px;background:#bfbfbf;"></div>
<div class="a" style="left:524px;top:1388px;width:2304px;height:2px;background:#bfbfbf;"></div>
<div class="a" style="left:524px;top:1422px;width:2304px;height:2px;background:#bfbfbf;"></div>
<div class="a" style="left:524px;top:1456px;width:2304px;height:2px;background:#bfbfbf;"></div>
<div class="a" style="left:524px;top:1490px;width:2304px;height:2px;background:#bfbfbf;"></div>
<div class="a" style="left:524px;top:1524px;width:2304px;height:2px;background:#bfbfbf;"></div>
<div class="a" style="left:524px;top:1558px;width:2304px;height:2px;background:#bfbfbf;"></div>
<div class="t" style="left:530px;top:908.0px;font-size:22px;color:#222;">Time:</div>
<div class="t lnk" style="left:804px;width:286px;text-align:center;top:896.0px;font-size:22px;font-weight:bold;">Sun Feb 9 </div>
<svg class="a" style="left:937.0px;top:919px" width="22" height="22" viewBox="0 0 22 22"><use href="#plusic"/></svg>
<div class="t lnk" style="left:1092px;width:286px;text-align:center;top:896.0px;font-size:22px;font-weight:bold;">Mon Feb 10 </div>
<svg class="a" style="left:1225.0px;top:919px" width="22" height="22" viewBox="0 0 22 22"><use href="#plusic"/></svg>
<div class="t lnk" style="left:1380px;width:286px;text-align:center;top:896.0px;font-size:22px;">Tue Feb 11 </div>
<svg class="a" style="left:1513.0px;top:919px" width="22" height="22" viewBox="0 0 22 22"><use href="#plusic"/></svg>
<div class="t lnk" style="left:1668px;width:288px;text-align:center;top:896.0px;font-size:22px;">Wed Feb 12 </div>
<svg class="a" style="left:1802.0px;top:919px" width="22" height="22" viewBox="0 0 22 22"><use href="#plusic"/></svg>
<div class="t lnk" style="left:1958px;width:288px;text-align:center;top:896.0px;font-size:22px;">Thu Feb 13 </div>
<svg class="a" style="left:2092.0px;top:919px" width="22" height="22" viewBox="0 0 22 22"><use href="#plusic"/></svg>
<div class="t lnk" style="left:2248px;width:288px;text-align:center;top:896.0px;font-size:22px;">Fri Feb 14 </div>
<svg class="a" style="left:2382.0px;top:919px" width="22" height="22" viewBox="0 0 22 22"><use href="#plusic"/></svg>
<div class="t lnk" style="left:2538px;width:288px;text-align:center;top:896.0px;font-size:22px;">Sat Feb 15 </div>
<svg class="a" style="left:2672.0px;top:919px" width="22" height="22" viewBox="0 0 22 22"><use href="#plusic"/></svg>
<div class="t" style="left:530px;top:954.0px;font-size:22px;color:#222;">9:00 AM</div>
<div class="t" style="left:530px;top:988.0px;font-size:22px;color:#222;">9:30 AM</div>
<div class="t" style="left:530px;top:1022.0px;font-size:22px;color:#222;">10:00 AM</div>
<div class="t" style="left:530px;top:1056.0px;font-size:22px;color:#222;">10:30 AM</div>
<div class="t" style="left:530px;top:1090.0px;font-size:22px;color:#222;">11:00 AM</div>
<div class="t" style="left:530px;top:1124.0px;font-size:22px;color:#222;">11:30 AM</div>
<div class="t" style="left:530px;top:1158.0px;font-size:22px;color:#222;">12:00 PM</div>
<div class="t" style="left:530px;top:1192.0px;font-size:22px;color:#222;">12:30 PM</div>
<div class="t" style="left:530px;top:1226.0px;font-size:22px;color:#222;">1:00 PM</div>
<div class="t" style="left:530px;top:1260.0px;font-size:22px;color:#222;">1:30 PM</div>
<div class="t" style="left:530px;top:1294.0px;font-size:22px;color:#222;">2:00 PM</div>
<div class="t" style="left:530px;top:1328.0px;font-size:22px;color:#222;">2:30 PM</div>
<div class="t" style="left:530px;top:1362.0px;font-size:22px;color:#222;">3:00 PM</div>
<div class="t" style="left:530px;top:1396.0px;font-size:22px;color:#222;">3:30 PM</div>
<div class="t" style="left:530px;top:1430.0px;font-size:22px;color:#222;">4:00 PM</div>
<div class="t" style="left:530px;top:1464.0px;font-size:22px;color:#222;">4:30 PM</div>
<div class="t" style="left:530px;top:1498.0px;font-size:22px;color:#222;">5:00 PM</div>
<div class="t" style="left:530px;top:1532.0px;font-size:22px;color:#222;">5:30 PM</div>
<div class="a" style="left:2400px;top:2100px;width:420px;height:90px;border-radius:16px 16px 0 0;background:#3f84c9;box-shadow:0 0 14px rgba(0,0,0,0.45);"></div>
<svg class="a" style="left:2416px;top:2122px" width="40" height="34" viewBox="0 0 40 34">
<path d="M15 2 C23 2 29 6.5 29 12 C29 17.5 23 22 15 22 C13.5 22 12 21.8 10.6 21.5 L3.5 25.5 L6 19.5 C2.5 17.6 1 15 1 12 C1 6.5 7 2 15 2 Z" fill="#fff"/>
<path d="M31.5 9.5 C35.5 11.3 38 14.3 38 17.8 C38 20.5 36.5 22.8 34 24.5 L36.5 30.5 L29.5 26.5 C28.3 26.8 27 27 25.6 27 C20.5 27 16.2 25 14.2 22.3 C23.5 22.5 31.2 17.5 31.5 9.5 Z" fill="#fff"/>
</svg>
<div class="t" style="left:2462px;top:2127.0px;font-size:29px;font-weight:bold;color:#fff;letter-spacing:-0.5px;">VOChat</div>
<svg class="a" style="left:2774px;top:2130px" width="28" height="22" viewBox="0 0 28 22"><path d="M3 4 L14 15 L25 4" stroke="#2f68a8" stroke-width="4" fill="none"/></svg>
<!-- HEADER_PLACEHOLDER -->

</div></div>
</body></html>
